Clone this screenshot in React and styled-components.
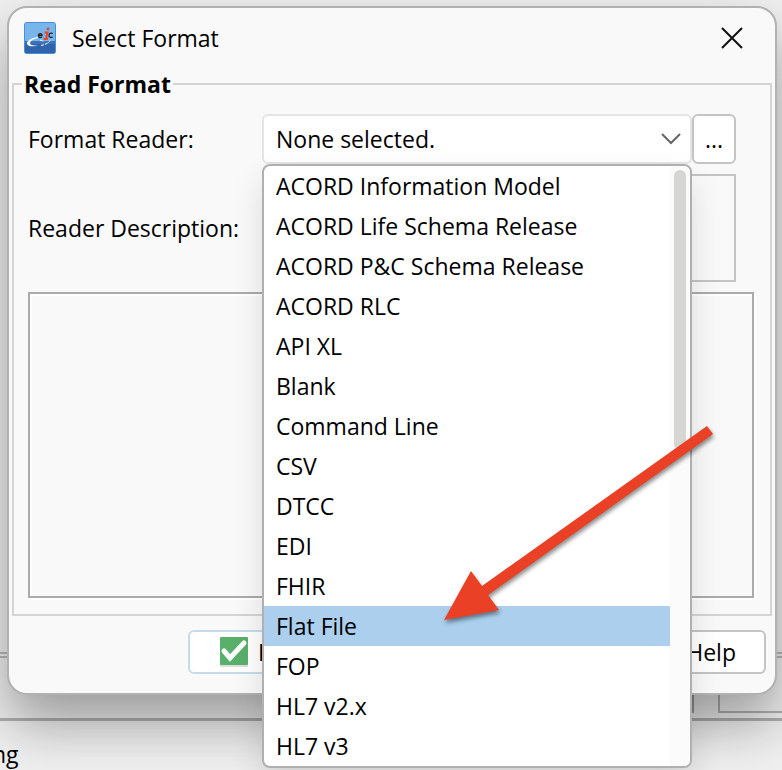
import { useState } from "react";
import styled, { createGlobalStyle } from "styled-components";

const formats = [
  "ACORD Information Model",
  "ACORD Life Schema Release",
  "ACORD P&C Schema Release",
  "ACORD RLC",
  "API XL",
  "Blank",
  "Command Line",
  "CSV",
  "DTCC",
  "EDI",
  "FHIR",
  "Flat File",
  "FOP",
  "HL7 v2.x",
  "HL7 v3",
];

const AppLogo = () => (
  <svg width="32" height="32" viewBox="0 0 32 32" aria-hidden="true">
    <rect width="32" height="32" rx="3" fill="#4a90d4" />
    <rect x="1" y="1" width="30" height="18" rx="1" fill="#77b5ea" />
    <rect x="1" y="19" width="30" height="12" rx="1" fill="#2f64ad" />
    <path d="M1 19h30v3H1z" fill="#3973ba" />
    <path d="M14 15C7 16 3 19 3 21.500c0 3 7 3.500 13 2-5 .5-10 0-10-2.200C6 19 9 17 14 16z" fill="#fff" />
    <path d="M16 18l4 1.500M17 23.500c4-.8 8-2.500 9-5" stroke="#fff" strokeWidth="1" strokeDasharray="3 1" fill="none" />
    <path d="M14.500 13.500h3.500c0-2.600-3.500-2.600-3.500 0 0 2.500 2 2.500 3.500 1.500M29 11.500c-3-1-4 .5-4 2s1.500 2.500 4 1.500" stroke="#1c2430" strokeWidth="1.300" fill="none" />
    <path d="M20.500 10.500h3l-1.500 6M19.500 17h4.500" stroke="#ee4422" strokeWidth="2" fill="none" />
    <circle cx="24" cy="7" r="1.400" fill="#ee4422" />
  </svg>
);

const CloseIcon = () => (
  <svg width="22" height="22" viewBox="0 0 22 22" aria-hidden="true">
    <path d="M1 1l20 20M21 1L1 21" stroke="#111" strokeWidth="2" />
  </svg>
);

const Chevron = styled.svg`
  position: absolute;
  right: 11px;
  top: 19px;
  pointer-events: none;
`;

const CheckIcon = () => (
  <svg width="28" height="30" viewBox="0 0 28 30" aria-hidden="true">
    <rect y="2" width="28" height="28" fill="#dedede" />
    <rect width="28" height="28" rx="1" fill="#59b06a" />
    <path d="M4 14l6 7L24 6" stroke="#fff" strokeWidth="5" strokeLinecap="round" fill="none" />
  </svg>
);

const App = () => {
  const [format, setFormat] = useState("");

  return (
    <Desktop>
      <GlobalStyle />

      <Backdrop aria-hidden="true">
        <BackPane />
        <BackFooter>
          <BackEdge />
          <BackBox />
        </BackFooter>
        <BackStatus>ng</BackStatus>
      </Backdrop>

      <Dialog role="dialog" aria-labelledby="dialog-title">
        <TitleBar>
          <AppLogo />
          <Title id="dialog-title">Select Format</Title>
          <CloseButton type="button" aria-label="Close">
            <CloseIcon />
          </CloseButton>
        </TitleBar>

        <Group>
          <Legend>Read Format</Legend>

          <Row>
            <Label htmlFor="reader">Format Reader:</Label>
            <Combo>
              <Select id="reader" value={format} onChange={(e) => setFormat(e.target.value)}>
                <option value="">None selected.</option>
                {formats.map((name) => (
                  <option key={name}>{name}</option>
                ))}
              </Select>
              <Chevron width="20" height="12" viewBox="0 0 20 12" aria-hidden="true">
                <path d="M1 1l9 9 9-9" stroke="#666" strokeWidth="2" fill="none" />
              </Chevron>
              <Popup>
                <List role="listbox" aria-label="Format Reader">
                  {formats.map((name) => (
                    <Item
                      key={name}
                      role="option"
                      aria-selected={name === "Flat File"}
                      $active={name === "Flat File"}
                      onClick={() => setFormat(name)}
                    >
                      {name}
                    </Item>
                  ))}
                </List>
                <Track>
                  <Thumb />
                </Track>
              </Popup>
            </Combo>
            <MoreButton type="button">...</MoreButton>
          </Row>

          <Row>
            <Label htmlFor="description">Reader Description:</Label>
            <Description id="description" readOnly />
          </Row>

          <Preview />
        </Group>

        <Actions>
          <ActionButton type="button" $focused>
            <CheckIcon />
            Read
          </ActionButton>
          <ActionButton type="button">Help</ActionButton>
        </Actions>
      </Dialog>

      <Arrow width="274" height="200" viewBox="0 0 274 200" aria-hidden="true">
        <path d="M267 0l6 8L48 169l11 15-55 10L31 145l11 15z" fill="#ea4025" />
      </Arrow>
    </Desktop>
  );
};

export default App;

const GlobalStyle = createGlobalStyle`
  * {
    box-sizing: border-box;
  }

  body {
    margin: 0;
    background: #f0f0f0;
    color: #000;
    font-family: "Open Sans", "Noto Sans", sans-serif;
    font-size: 23px;
    line-height: 32px;
  }

  button, select, textarea {
    font: inherit;
    color: inherit;
  }
`;

const Desktop = styled.div`
  position: relative;
  min-height: 100vh;
  padding: 6px 5px 0 7px;
  overflow: hidden;
`;

/* the application window behind the dialog */
const Backdrop = styled.div`
  position: absolute;
  inset: 0;
  display: flex;
  flex-direction: column;
`;

const BackPane = styled.div`
  height: 658px;
  border-bottom: 6px double #b8b8b8;
`;

const BackFooter = styled.div`
  display: flex;
  justify-content: flex-end;
  gap: 24px;
  height: 63px;
  padding-bottom: 5px;
  border-bottom: 3px solid #b0b0b0;
`;

const BackEdge = styled.div`
  width: 2px;
  background: #a0a0a0;
`;

const BackBox = styled.div`
  width: 64px;
  border: 2px solid #b0b0b0;
  border-width: 0 0 2px 2px;
`;

const BackStatus = styled.div`
  padding-top: 17px;
  margin-left: -8px;
`;

const Dialog = styled.section`
  position: relative;
  display: flex;
  flex-direction: column;
  border: 2px solid #b2b2b2;
  border-radius: 20px;
  background: #f9f9f9;
  box-shadow: 0 28px 56px rgba(0, 0, 0, 0.36);
`;

const TitleBar = styled.header`
  display: flex;
  align-items: center;
  gap: 16px;
  height: 60px;
  padding: 0 28px 0 15px;
`;

const Title = styled.h1`
  flex: 1;
  margin: 0;
  font-size: 23px;
  font-weight: 400;
`;

const CloseButton = styled.button`
  display: flex;
  padding: 4px;
  border: 0;
  background: none;
`;

const Group = styled.fieldset`
  min-width: 0;
  display: flex;
  flex-direction: column;
  gap: 10px;
  margin: 0 3px;
  padding: 14px 16px 16px 14px;
  border: 2px solid #d4d4d4;
`;

const Legend = styled.legend`
  margin-left: -6px;
  padding: 0 2px;
  font-size: 23px;
  font-weight: 700;
`;

const Row = styled.div`
  display: flex;
  align-items: center;
  padding-right: 18px;
`;

const Label = styled.label`
  flex: 0 0 234px;
`;

const Combo = styled.div`
  position: relative;
  flex: 1;
`;

const Select = styled.select`
  appearance: none;
  display: block;
  width: 100%;
  height: 50px;
  padding: 0 40px 0 12px;
  border: 2px solid #e4e4e4;
  border-radius: 6px;
  background: #fff;
`;

const Popup = styled.div`
  position: absolute;
  z-index: 2;
  top: 100%;
  left: 0;
  right: 0;
  display: flex;
  border: 2px solid #b0b0b0;
  border-radius: 8px;
  background: #fff;
  overflow: hidden;
  box-shadow: 0 16px 32px rgba(0, 0, 0, 0.12);
`;

const List = styled.ul`
  flex: 1;
  margin: 0;
  padding: 0;
  list-style: none;
`;

const Item = styled.li`
  height: 40px;
  padding-left: 12px;
  line-height: 40px;
  white-space: nowrap;
  background: ${(props) => (props.$active ? "#abcfec" : "transparent")};
`;

const Track = styled.div`
  width: 20px;
  padding: 4px;
  background: #fbfbfb;
`;

const Thumb = styled.div`
  height: 280px;
  border-radius: 6px;
  background: #d6d6d5;
`;

const MoreButton = styled.button`
  width: 44px;
  height: 50px;
  padding: 0;
  border: 2px solid #c4c4c4;
  border-radius: 6px;
  background: #fff;
`;

const Description = styled.textarea`
  flex: 1;
  height: 108px;
  resize: none;
  border: 2px solid #c4c4c4;
  background: #f9f9f9;
`;

const Preview = styled.div`
  height: 306px;
  border: 2px solid #ababab;
  box-shadow: inset 2px 2px #fff, 2px 2px #fff;
`;

const Actions = styled.footer`
  display: flex;
  justify-content: space-between;
  margin-left: 179px;
  padding: 14px 9px 19px 0;
`;

const ActionButton = styled.button`
  display: flex;
  align-items: center;
  gap: 10px;
  height: 44px;
  padding: 0 28px 0 30px;
  border: 2px solid ${(props) => (props.$focused ? "#c3dcec" : "#c4c4c4")};
  border-radius: 6px;
  background: #fff;
`;

const Arrow = styled.svg`
  position: absolute;
  z-index: 3;
  top: 426px;
  left: 440px;
  pointer-events: none;
  filter: drop-shadow(1px 3px 2px rgba(0, 0, 0, 0.45));
`;
